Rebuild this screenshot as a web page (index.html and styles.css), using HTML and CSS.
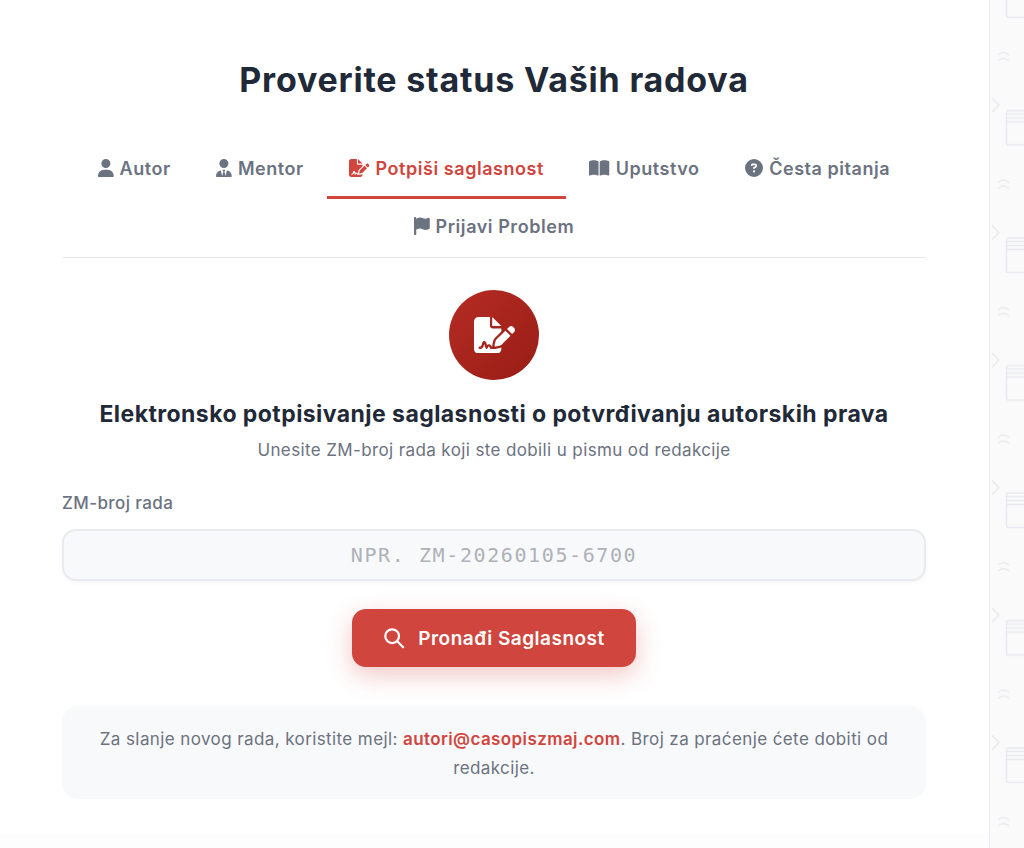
FILE: index.html
```html
<!DOCTYPE html>
<html lang="sr">
<head>
    <meta charset="UTF-8">
    <meta name="viewport" content="width=device-width, initial-scale=1.0">
    <title>Proverite status Vaših radova</title>
    <link rel="stylesheet" href="styles.css">
</head>
<body>
    <!-- decorative background, only the right edge shows next to the card -->
    <div class="edge-pattern" aria-hidden="true">
        <svg class="edge-svg" width="34" height="848">
            <defs>
                <pattern id="edge" width="34" height="127.5" patternUnits="userSpaceOnUse">
                    <path class="pat-line" d="M2 98l7 7l-7 7" />
                    <path class="pat-line" d="M18 110.500h30v34.500h-30a1.500 1.500 0 0 1 -1.500 -1.500v-31.500a1.500 1.500 0 0 1 1.500 -1.500zM17 114h20M17 118h20M17 122h20" />
                    <path class="pat-line" d="M18 -17h30v34.500h-30a1.500 1.500 0 0 1 -1.500 -1.500v-33zM17 -13.500h20M17 -9.500h20M17 -5.500h20" />
                    <path class="pat-line" d="M8 55q5.500 -5 11 0M8 61q5.500 -5 11 0" />
                </pattern>
            </defs>
            <rect width="34" height="848" fill="url(#edge)" />
        </svg>
    </div>

    <main class="card">
        <h1 class="page-title">Proverite status Vaših radova</h1>

        <nav class="tabs">
            <a href="#" class="tab">
                <svg class="tab-icon" viewBox="0 0 448 512"><path d="M224 256A128 128 0 1 0 224 0a128 128 0 1 0 0 256zm-45.700 48C79.800 304 0 383.800 0 482.300C0 498.700 13.300 512 29.700 512H418.300c16.400 0 29.700-13.300 29.700-29.700C448 383.800 368.200 304 269.700 304H178.300z"/></svg>
                Autor
            </a>
            <a href="#" class="tab">
                <svg class="tab-icon" viewBox="0 0 448 512"><path d="M96 128a128 128 0 1 0 256 0A128 128 0 1 0 96 128zm94.500 200.200l18.600 31L175.800 483.100l-36-146.900c-2-8.100-9.800-13.400-17.900-11.300C51.900 342.400 0 405.800 0 481.300c0 17 13.800 30.700 30.700 30.700H162.500c0 0 0 0 .1 0H168 280h5.500c0 0 0 0 .1 0H417.300c17 0 30.700-13.800 30.700-30.700c0-75.500-51.900-138.900-121.900-156.400c-8.100-2-15.900 3.300-17.900 11.300l-36 146.900L238.900 359.200l18.600-31c6.400-10.700-1.300-24.200-13.700-24.200H224 204.300c-12.400 0-20.100 13.600-13.700 24.200z"/></svg>
                Mentor
            </a>
            <a href="#" class="tab active">
                <svg class="tab-icon" viewBox="0 0 576 512"><path d="M64 0C28.700 0 0 28.700 0 64V448c0 35.300 28.700 64 64 64H320c35.300 0 64-28.700 64-64V428.700c-2.700 1.100-5.400 2-8.200 2.700l-60.100 15c-3 .7-6 1.200-9 1.400c-.9 .1-1.800 .2-2.700 .2H240c-6.100 0-11.600-3.400-14.300-8.800l-8.800-17.700c-1.700-3.400-5.100-5.500-8.800-5.500s-7.200 2.100-8.800 5.500l-8.800 17.700c-2.900 5.900-9.200 9.400-15.700 8.800s-12.100-5.100-13.900-11.300L144 381l-9.800 32.800c-6.100 20.300-24.800 34.200-46 34.200H80c-8.800 0-16-7.200-16-16s7.200-16 16-16h8.200c7.100 0 13.300-4.600 15.300-11.400l14.900-49.500c3.400-11.300 13.800-19.100 25.600-19.100s22.200 7.700 25.600 19.100l11.600 38.600c7.400-6.200 16.800-9.700 26.800-9.700c15.900 0 30.400 9 37.500 23.200l4.400 8.800h8.900c-3.100-8.800-3.700-18.400-1.400-27.800l15-60.100c2.800-11.300 8.600-21.500 16.800-29.700L384 203.600V160H256c-17.700 0-32-14.300-32-32V0H64zM256 0V128H384L256 0zM549.800 139.700c-15.600-15.600-40.900-15.600-56.600 0l-29.400 29.400 71 71 29.400-29.400c15.600-15.600 15.600-40.900 0-56.600l-14.400-14.400zM311.900 321c-4.100 4.100-7 9.200-8.400 14.900l-15 60.100c-1.400 5.500 .2 11.200 4.200 15.200s9.700 5.600 15.200 4.200l60.100-15c5.600-1.400 10.800-4.300 14.900-8.400L512.100 262.700l-71-71L311.900 321z"/></svg>
                Potpiši saglasnost
            </a>
            <a href="#" class="tab">
                <svg class="tab-icon" viewBox="0 0 576 512"><path d="M249.600 471.500c10.800 3.800 22.400-4.100 22.400-15.500V78.600c0-4.200-1.600-8.400-5-11C247.400 52 202.400 32 144 32C93.500 32 46.300 45.300 18.100 56.100C6.800 60.500 0 71.700 0 83.800V454.100c0 11.900 12.800 20.200 24.100 16.500C55.600 460.100 105.500 448 144 448c33.900 0 79 14 105.600 23.500zm76.800 0C353 462 398.100 448 432 448c38.500 0 88.400 12.100 119.900 22.600c11.300 3.800 24.100-4.600 24.100-16.500V83.800c0-12.100-6.800-23.300-18.100-27.600C529.700 45.300 482.500 32 432 32c-58.400 0-103.400 20-123 35.600c-3.300 2.600-5 6.800-5 11V456c0 11.400 11.700 19.300 22.400 15.500z"/></svg>
                Uputstvo
            </a>
            <a href="#" class="tab">
                <svg class="tab-icon" viewBox="0 0 512 512"><path d="M256 512A256 256 0 1 0 256 0a256 256 0 1 0 0 512zM169.800 165.300c7.900-22.300 29.100-37.300 52.800-37.300h58.300c34.900 0 63.100 28.300 63.100 63.100c0 22.600-12.100 43.500-31.700 54.800L280 264.400c-.2 13-10.900 23.600-24 23.600c-13.300 0-24-10.700-24-24V250.500c0-8.600 4.600-16.500 12.100-20.800l44.300-25.400c4.700-2.700 7.600-7.700 7.600-13.100c0-8.400-6.800-15.100-15.100-15.100H222.600c-3.400 0-6.400 2.100-7.500 5.300l-.4 1.200c-4.400 12.500-18.200 19-30.600 14.600s-19-18.200-14.600-30.600l.4-1.200zM224 352a32 32 0 1 1 64 0 32 32 0 1 1 -64 0z"/></svg>
                Česta pitanja
            </a>
            <a href="#" class="tab">
                <svg class="tab-icon" viewBox="0 0 448 512"><path d="M64 32C64 14.300 49.700 0 32 0S0 14.300 0 32V64 368 480c0 17.700 14.300 32 32 32s32-14.300 32-32V352l64.300-16.100c41.100-10.300 84.600-5.500 122.500 13.400c44.200 22.100 95.500 24.800 141.700 7.400l34.700-13c12.500-4.700 20.800-16.600 20.800-29.900V54.700c0-23-24.200-38-44.800-27.700l-9.600 4.800c-46.300 23.200-100.800 23.200-147.100 0c-35.100-17.600-75.400-22-113.500-12.500L64 48V32z"/></svg>
                Prijavi Problem
            </a>
        </nav>

        <section class="sign-panel">
            <div class="sign-badge">
                <svg class="sign-icon" viewBox="0 0 576 512"><path d="M64 0C28.700 0 0 28.700 0 64V448c0 35.300 28.700 64 64 64H320c35.300 0 64-28.700 64-64V428.700c-2.700 1.100-5.400 2-8.200 2.700l-60.100 15c-3 .7-6 1.200-9 1.400c-.9 .1-1.800 .2-2.700 .2H240c-6.100 0-11.600-3.400-14.300-8.800l-8.800-17.700c-1.700-3.400-5.100-5.500-8.800-5.500s-7.200 2.100-8.800 5.500l-8.800 17.700c-2.900 5.900-9.200 9.400-15.700 8.800s-12.100-5.100-13.900-11.300L144 381l-9.800 32.800c-6.100 20.300-24.800 34.200-46 34.200H80c-8.800 0-16-7.200-16-16s7.200-16 16-16h8.200c7.100 0 13.300-4.600 15.300-11.400l14.900-49.500c3.400-11.300 13.800-19.100 25.600-19.100s22.200 7.700 25.600 19.100l11.600 38.600c7.400-6.200 16.800-9.700 26.800-9.700c15.900 0 30.400 9 37.500 23.200l4.400 8.800h8.900c-3.100-8.800-3.700-18.400-1.400-27.800l15-60.100c2.800-11.300 8.600-21.500 16.800-29.700L384 203.600V160H256c-17.700 0-32-14.300-32-32V0H64zM256 0V128H384L256 0zM549.800 139.700c-15.600-15.600-40.900-15.600-56.600 0l-29.400 29.400 71 71 29.400-29.400c15.600-15.600 15.600-40.900 0-56.600l-14.400-14.400zM311.900 321c-4.100 4.100-7 9.200-8.400 14.900l-15 60.100c-1.400 5.500 .2 11.200 4.200 15.200s9.700 5.600 15.200 4.200l60.100-15c5.600-1.400 10.800-4.300 14.900-8.400L512.100 262.700l-71-71L311.900 321z"/></svg>
            </div>
            <h2 class="sign-title">Elektronsko potpisivanje saglasnosti o potvrđivanju autorskih prava</h2>
            <p class="sign-subtitle">Unesite ZM-broj rada koji ste dobili u pismu od redakcije</p>

            <form class="sign-form">
                <label class="field-label" for="zmBroj">ZM-broj rada</label>
                <input class="field-input" type="text" id="zmBroj" placeholder="NPR. ZM-20260105-6700" autocomplete="off">
                <button type="submit" class="find-button">
                    <svg class="find-icon" viewBox="0 0 24 24"><circle cx="10" cy="10" r="7.500"/><path d="M15.500 15.500l6.500 6.500"/></svg>
                    Pronađi Saglasnost
                </button>
            </form>

            <div class="info-box">
                Za slanje novog rada, koristite mejl: <a href="#" class="info-link">autori@casopiszmaj.com</a>. Broj za praćenje ćete dobiti od redakcije.
            </div>
        </section>
    </main>
</body>
</html>
```

FILE: styles.css
```css
* {
    margin: 0;
    padding: 0;
    box-sizing: border-box;
}

html, body {
    height: 848px;
    overflow: hidden;
}

body {
    background-color: #fbfafa;
    font-family: "Inter", "Noto Sans", sans-serif;
    color: #6b7280;
    position: relative;
}

.edge-pattern {
    position: absolute;
    top: 0;
    right: 0;
    width: 34px;
    height: 848px;
}

.edge-svg {
    display: block;
}

.pat-line {
    fill: none;
    stroke: #e8eaf0;
    stroke-width: 1.500;
}

.card {
    position: relative;
    width: 990px;
    height: 848px;
    background: linear-gradient(#fff 833px, #fdfdfd 833px);
    border-right: 1px solid #e8eaf1;
    padding: 58px 63px 0 62px;
}

.page-title {
    font-size: 34px;
    line-height: 44px;
    font-weight: 700;
    letter-spacing: 0.8px;
    color: #1f2937;
    text-align: center;
    margin-bottom: 37px;
}

/* tabs wrap on two rows, the red line hangs over the divider */
.tabs {
    display: flex;
    flex-wrap: wrap;
    justify-content: center;
    column-gap: 0.5px;
    padding-bottom: 2px;
    border-bottom: 1px solid #e5e7eb;
    margin-bottom: 32px;
}

.tab {
    position: relative;
    display: flex;
    align-items: center;
    gap: 6px;
    height: 58px;
    padding: 0 22.5px;
    font-size: 18px;
    font-weight: 600;
    letter-spacing: 0.55px;
    color: #6b7280;
    text-decoration: none;
}

.tab-icon {
    height: 18px;
    fill: currentColor;
}

.tab.active {
    color: #d0453d;
}

.tab.active::after {
    content: "";
    position: absolute;
    left: 0;
    right: 0;
    bottom: -2px;
    height: 3px;
    background-color: #d0453d;
}

.sign-panel {
    display: flex;
    flex-direction: column;
    align-items: center;
}

.sign-badge {
    width: 90px;
    height: 90px;
    border-radius: 50%;
    background: linear-gradient(135deg, #b52c24, #981d15);
    display: flex;
    align-items: center;
    justify-content: center;
    margin-bottom: 19px;
}

.sign-icon {
    width: 41px;
    fill: #fff;
}

.sign-title {
    font-size: 23px;
    line-height: 30px;
    font-weight: 700;
    letter-spacing: 0.44px;
    color: #1f2937;
    margin-bottom: 8px;
}

.sign-subtitle {
    font-size: 17px;
    line-height: 26px;
    letter-spacing: 0.38px;
    color: #6b7280;
    margin-bottom: 28px;
}

.sign-form {
    width: 100%;
    display: flex;
    flex-direction: column;
    align-items: center;
}

.field-label {
    align-self: flex-start;
    font-size: 17px;
    line-height: 24px;
    font-weight: 500;
    letter-spacing: 0.4px;
    color: #6b7280;
    margin-bottom: 14px;
}

.field-input {
    width: 100%;
    height: 52px;
    background-color: #f8f9fb;
    border: 2px solid #e9ebf0;
    border-radius: 14px;
    box-shadow: 0 2px 4px rgba(0, 0, 0, 0.04);
    font-family: "DejaVu Sans Mono", monospace;
    font-size: 20px;
    letter-spacing: 1.6px;
    text-align: center;
    text-transform: uppercase;
    outline: none;
    margin-bottom: 28px;
}

.field-input::placeholder {
    color: #aeb1b8;
    opacity: 1;
}

.find-button {
    display: flex;
    align-items: center;
    justify-content: center;
    gap: 13px;
    width: 284px;
    height: 58px;
    background-color: #d0453d;
    color: #fff;
    border: none;
    border-radius: 14px;
    box-shadow: 0 8px 24px rgba(208, 69, 61, 0.3);
    font-family: inherit;
    font-size: 19px;
    font-weight: 600;
    letter-spacing: 0.5px;
    cursor: pointer;
}

.find-icon {
    width: 22px;
    height: 22px;
    fill: none;
    stroke: #fff;
    stroke-width: 2.400;
    stroke-linecap: round;
}

.info-box {
    width: 100%;
    margin-top: 39px;
    padding: 19px 32px 16px;
    background-color: #f8f9fb;
    border-radius: 16px;
    font-size: 17px;
    line-height: 29px;
    letter-spacing: 0.4px;
    color: #6b7280;
    text-align: center;
}

.info-link {
    color: #d0453d;
    font-weight: 600;
    text-decoration: none;
}
```
